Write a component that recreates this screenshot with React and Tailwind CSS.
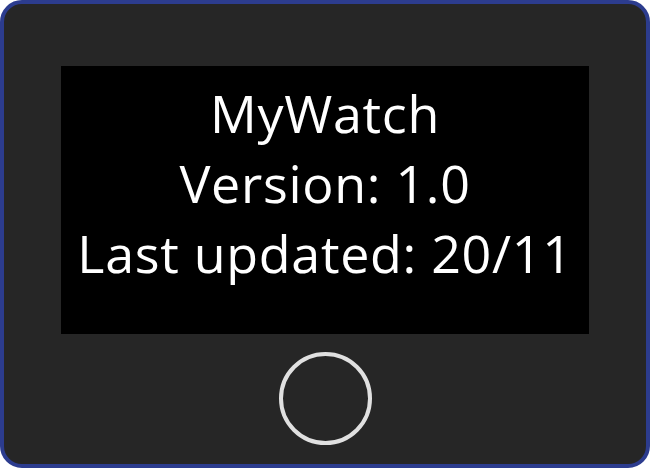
export default function App() {
  return (
    <div className="w-[650px] h-[468px] bg-white">
      <div className="w-full h-full rounded-[22px] border-4 border-[#2c3c8e] bg-[#262626] flex flex-col items-center pt-[62px]">
        <div
          className="w-[528px] h-[268px] bg-black flex flex-col items-center justify-center text-white text-[52px] leading-[70px] tracking-[0.7px] pb-[34px]"
          style={{ fontFamily: '"Open Sans", sans-serif' }}
        >
          <div>MyWatch</div>
          <div>Version: 1.0</div>
          <div>Last updated: 20/11</div>
        </div>
        <div className="mt-[18px] w-[93px] h-[93px] rounded-full border-4 border-[#e0e0e0]" />
      </div>
    </div>
  );
}
